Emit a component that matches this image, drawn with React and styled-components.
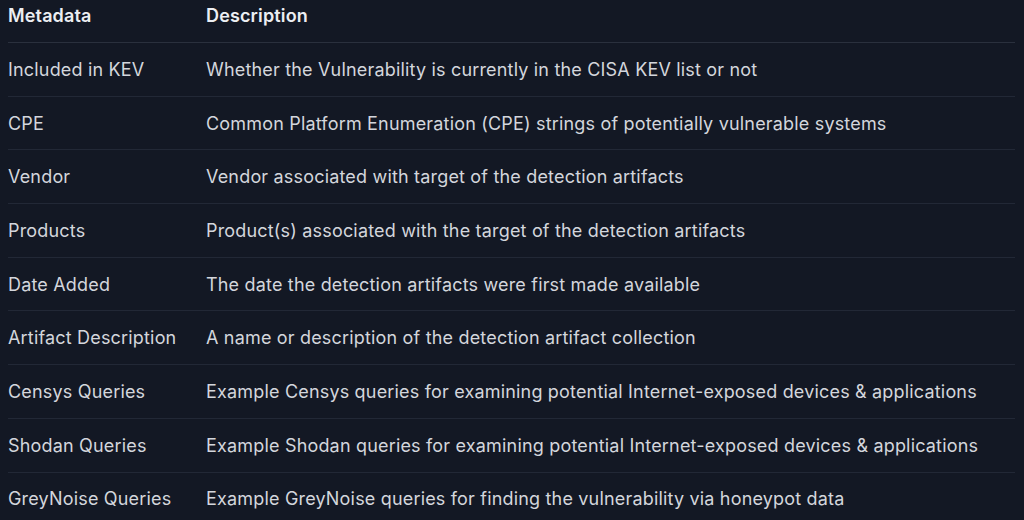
import React from "react";
import styled, { createGlobalStyle } from "styled-components";

const Global = createGlobalStyle`
  html, body { margin: 0; padding: 0; background: #131824; }
  body { font-family: Inter, "Noto Sans", sans-serif; -webkit-font-smoothing: antialiased; }
`;

const Page = styled.div`
  width: 1024px;
  height: 520px;
  overflow: hidden;
  background: #131824;
  padding: 0 9px 0 8px;
  box-sizing: border-box;
`;

const Table = styled.div`
  display: flex;
  flex-direction: column;
`;

const HeaderRow = styled.div`
  display: grid;
  grid-template-columns: 198px 1fr;
  height: 43px;
  box-sizing: border-box;
  padding-top: 4px;
  border-bottom: 1px solid #2a303d;
  font-size: 18px;
  line-height: 24px;
  font-weight: 600;
  letter-spacing: 0.15px;
  color: #eceef2;
`;

const Row = styled.div`
  display: grid;
  grid-template-columns: 198px 1fr;
  align-items: center;
  height: 53.7px;
  box-sizing: border-box;
  padding-top: 1px;
  border-bottom: 1px solid ${(p) => (p.$last ? "transparent" : "#222836")};
  font-size: 18px;
  line-height: 24px;
  font-weight: 400;
  letter-spacing: 0.18px;
  color: #d3d6dc;
`;

const Cell = styled.div`
  white-space: nowrap;
`;

const rows = [
  ["Included in KEV", "Whether the Vulnerability is currently in the CISA KEV list or not"],
  ["CPE", "Common Platform Enumeration (CPE) strings of potentially vulnerable systems"],
  ["Vendor", "Vendor associated with target of the detection artifacts"],
  ["Products", "Product(s) associated with the target of the detection artifacts"],
  ["Date Added", "The date the detection artifacts were first made available"],
  ["Artifact Description", "A name or description of the detection artifact collection"],
  ["Censys Queries", "Example Censys queries for examining potential Internet-exposed devices & applications"],
  ["Shodan Queries", "Example Shodan queries for examining potential Internet-exposed devices & applications"],
  ["GreyNoise Queries", "Example GreyNoise queries for finding the vulnerability via honeypot data"],
];

export default function App() {
  return (
    <Page>
      <Global />
      <Table>
        <HeaderRow>
          <Cell>Metadata</Cell>
          <Cell>Description</Cell>
        </HeaderRow>
        {rows.map(([a, b], i) => (
          <Row key={a} $last={i === rows.length - 1}>
            <Cell>{a}</Cell>
            <Cell>{b}</Cell>
          </Row>
        ))}
      </Table>
    </Page>
  );
}
